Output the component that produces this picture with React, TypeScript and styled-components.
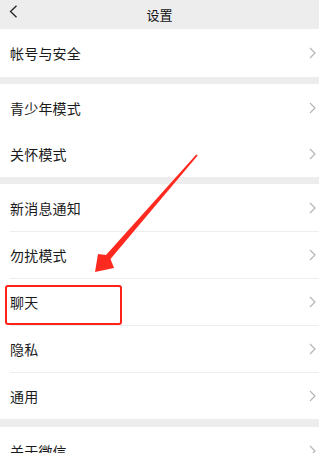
import React from 'react';
import styled, { createGlobalStyle } from 'styled-components';

const GlobalStyle = createGlobalStyle`
  html, body {
    margin: 0;
    padding: 0;
    background: #ededed;
  }
  body {
    font-family: "Noto Sans CJK SC", "Noto Sans", sans-serif;
    -webkit-font-smoothing: antialiased;
  }
`

const Page = styled.div`
  position: relative;
  width: 319px;
  height: 453px;
  overflow: hidden;
  background: #ededed;
`

const Header = styled.div`
  height: 29px;
  display: flex;
  align-items: center;
  justify-content: center;
  position: relative;
  font-size: 13px;
  color: #111;
`

const BackButton = styled.div`
  position: absolute;
  left: 9px;
  top: 5px;
  display: flex;
`

const Group = styled.div<{ $gap: number }>`
  background: #fff;
  margin-bottom: ${(p) => p.$gap}px;
`

const Row = styled.div<{ $height: number }>`
  height: ${(p) => p.$height}px;
  display: flex;
  align-items: center;
  justify-content: space-between;
  padding: 0 3px 0 10px;
  position: relative;

  & + &::before {
    content: '';
    position: absolute;
    top: 0;
    left: 10px;
    right: 0;
    height: 1px;
    background: #eeeeee;
  }
`

const Label = styled.span`
  font-size: 14px;
  color: #1a1a1a;
  letter-spacing: 0.2px;
`

const Highlight = styled.div`
  position: absolute;
  left: 5px;
  top: 285px;
  width: 113px;
  height: 36px;
  border: 2px solid #ff2219;
  border-radius: 3px;
  pointer-events: none;
`

const Overlay = styled.svg`
  position: absolute;
  left: 0;
  top: 0;
  pointer-events: none;
`

const Chevron = () => (
  <svg width="7" height="12" viewBox="0 0 7 12">
    <polyline points="1,1 6,6 1,11" fill="none" stroke="#b5b5b5" strokeWidth="1.2" />
  </svg>
)

const groups: { gap: number; rows: { label: string; h: number }[] }[] = [
  { gap: 7, rows: [{ label: '帐号与安全', h: 48 }] },
  { gap: 7, rows: [{ label: '青少年模式', h: 47 }, { label: '关怀模式', h: 46 }] },
  {
    gap: 8,
    rows: [
      { label: '新消息通知', h: 47 },
      { label: '勿扰模式', h: 47 },
      { label: '聊天', h: 47 },
      { label: '隐私', h: 47 },
      { label: '通用', h: 47 },
    ],
  },
  { gap: 0, rows: [{ label: '关于微信', h: 47 }] },
]

const App: React.FC = () => {
  return (
    <Page>
      <GlobalStyle />
      <Header>
        <BackButton>
          <svg width="9" height="13" viewBox="0 0 9 13">
            <polyline points="7.5,0.8 1.5,6.5 7.5,12.2" fill="none" stroke="#222" strokeWidth="1.3" />
          </svg>
        </BackButton>
        设置
      </Header>
      {groups.map((g, i) => (
        <Group key={i} $gap={g.gap}>
          {g.rows.map((r) => (
            <Row key={r.label} $height={r.h}>
              <Label>{r.label}</Label>
              <Chevron />
            </Row>
          ))}
        </Group>
      ))}
      <Highlight />
      <Overlay width="319" height="453" viewBox="0 0 319 453">
        <polygon
          points="197.7,155.5 110.5,259 114,268 95,272 98,254 106,255 196.3,154.5"
          fill="#ff2a1f"
        />
      </Overlay>
    </Page>
  )
}

export default App
